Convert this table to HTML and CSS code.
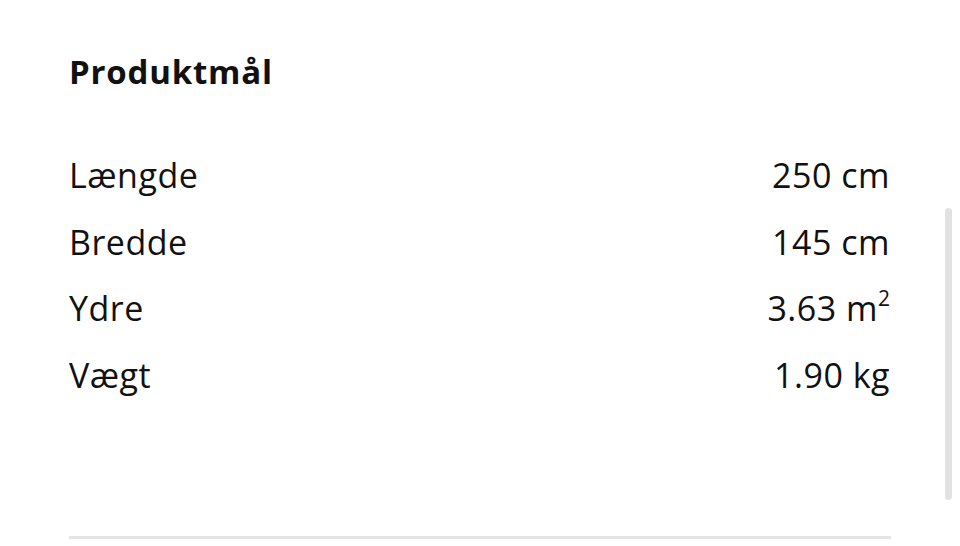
FILE: index.html
```html
<!DOCTYPE html>
<html lang="da">
<head>
<meta charset="utf-8">
<link rel="stylesheet" href="styles.css">
</head>
<body>
<div class="page">
  <section class="panel">
    <h2 class="title">Produktmål</h2>
    <dl class="dims">
      <div class="row"><dt>Længde</dt><dd>250 cm</dd></div>
      <div class="row"><dt>Bredde</dt><dd>145 cm</dd></div>
      <div class="row"><dt>Ydre</dt><dd>3.63 m<sup>2</sup></dd></div>
      <div class="row"><dt>Vægt</dt><dd>1.90 kg</dd></div>
    </dl>
    <div class="rule"></div>
  </section>
  <div class="scrollbar"></div>
</div>
</body>
</html>
```
FILE: styles.css
```css
html, body {
  margin: 0;
  padding: 0;
  background: #fff;
}
body {
  width: 960px;
  height: 546px;
  overflow: hidden;
  font-family: "Open Sans", "Noto Sans", sans-serif;
  color: #111;
}
.page {
  position: relative;
  height: 546px;
}
.panel {
  width: 822px;
  margin-left: 69px;
  padding-top: 50px;
}
.title {
  margin: 0;
  font-size: 33px;
  font-weight: 700;
  line-height: 44px;
  letter-spacing: 0.8px;
}
.dims {
  margin: 59px 0 0;
  padding: 0;
}
.row {
  display: flex;
  justify-content: space-between;
  align-items: baseline;
  height: 66.5px;
  font-size: 34px;
  line-height: 44px;
  letter-spacing: 0.5px;
}
.row dt, .row dd {
  margin: 0;
}
.row dd {
  padding-right: 1px;
}
.row sup {
  font-size: 21px;
  line-height: 0;
  vertical-align: 15px;
  letter-spacing: 0;
}
.rule {
  margin-top: 117px;
  height: 3px;
  background: #e4e4e4;
}
.scrollbar {
  position: absolute;
  left: 945px;
  top: 208px;
  width: 7px;
  height: 292px;
  border-radius: 4px;
  background: #e2e2e2;
}
```
